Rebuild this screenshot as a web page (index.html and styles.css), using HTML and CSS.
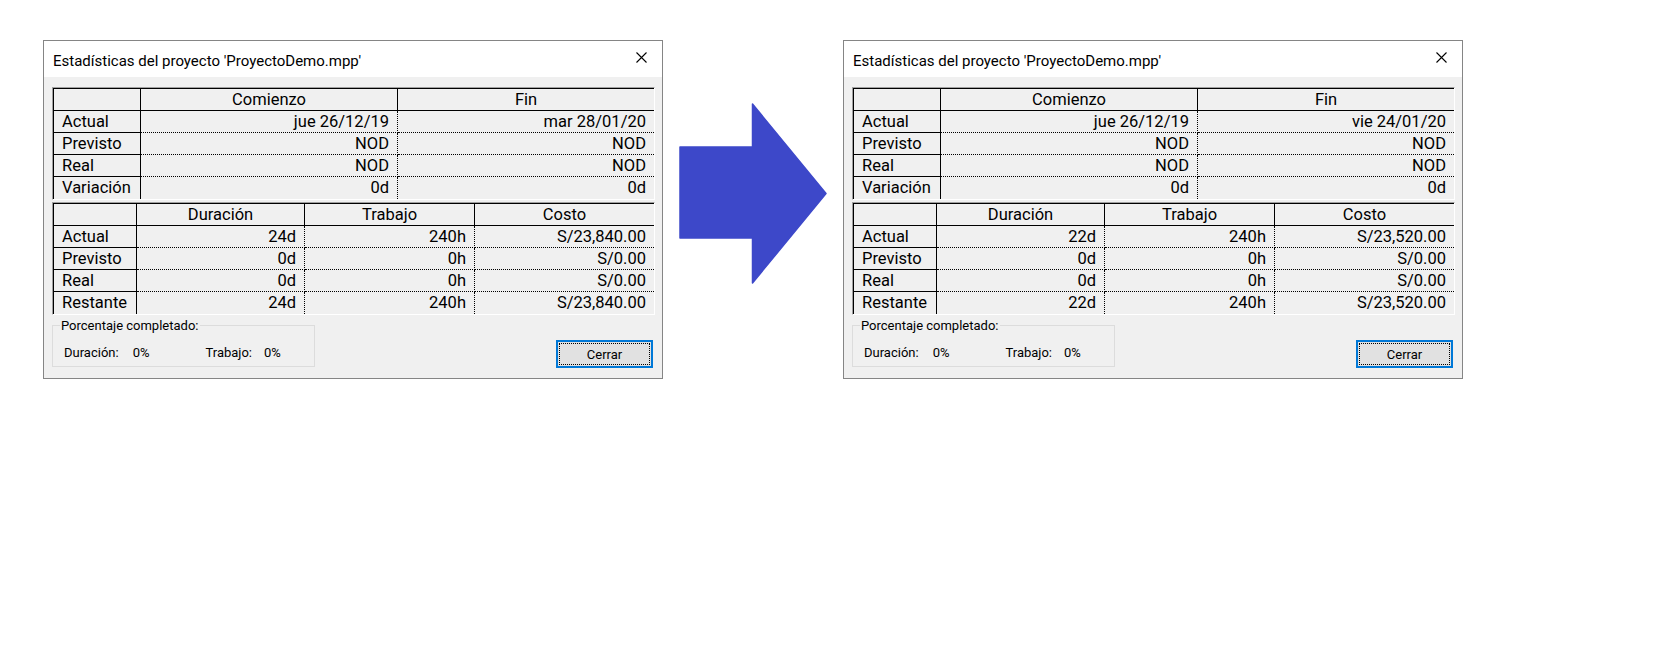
FILE: index.html
```html
<!DOCTYPE html>
<html lang="es">
<head>
<meta charset="utf-8">
<title>Estadísticas del proyecto</title>
<link rel="stylesheet" href="styles.css">
</head>
<body>
<div class="stage">
  <div class="dialog">
    <div class="titlebar">
      <span class="title">Estadísticas del proyecto 'ProyectoDemo.mpp'</span>
      <svg class="close" width="11" height="11" viewBox="0 0 11 11"><path d="M0.5 0.5 L10.5 10.5 M10.5 0.5 L0.5 10.5" stroke="#000" stroke-width="1.1" fill="none"/></svg>
    </div>
    <div class="content">
      <div class="grid g1">
        <div class="h lab"></div><div class="h">Comienzo</div><div class="h last">Fin</div>
        <div class="lab">Actual</div><div class="v">jue 26/12/19</div><div class="v last">mar 28/01/20</div>
        <div class="lab">Previsto</div><div class="v">NOD</div><div class="v last">NOD</div>
        <div class="lab">Real</div><div class="v">NOD</div><div class="v last">NOD</div>
        <div class="lab end">Variación</div><div class="v end">0d</div><div class="v last end">0d</div>
      </div>
      <div class="grid g2">
        <div class="h lab"></div><div class="h">Duración</div><div class="h">Trabajo</div><div class="h last">Costo</div>
        <div class="lab">Actual</div><div class="v">24d</div><div class="v">240h</div><div class="v last">S/23,840.00</div>
        <div class="lab">Previsto</div><div class="v">0d</div><div class="v">0h</div><div class="v last">S/0.00</div>
        <div class="lab">Real</div><div class="v">0d</div><div class="v">0h</div><div class="v last">S/0.00</div>
        <div class="lab end">Restante</div><div class="v end">24d</div><div class="v end">240h</div><div class="v last end">S/23,840.00</div>
      </div>
      <div class="bottom">
        <fieldset class="group">
          <legend>Porcentaje completado:</legend>
          <div class="pct"><span class="k">Duración:</span><span class="p1">0%</span><span class="k k2">Trabajo:</span><span>0%</span></div>
        </fieldset>
        <button class="btn"><span class="focus">Cerrar</span></button>
      </div>
    </div>
  </div>

  <svg class="arrow" width="148" height="181" viewBox="0 0 148 181"><path d="M1 44 H73.5 V1 L147 90.5 L73.5 180 V135 H1 Z" fill="#3d48c9" stroke="#3d48c9" stroke-width="1.5" stroke-linejoin="round"/></svg>

  <div class="dialog">
    <div class="titlebar">
      <span class="title">Estadísticas del proyecto 'ProyectoDemo.mpp'</span>
      <svg class="close" width="11" height="11" viewBox="0 0 11 11"><path d="M0.5 0.5 L10.5 10.5 M10.5 0.5 L0.5 10.5" stroke="#000" stroke-width="1.1" fill="none"/></svg>
    </div>
    <div class="content">
      <div class="grid g1">
        <div class="h lab"></div><div class="h">Comienzo</div><div class="h last">Fin</div>
        <div class="lab">Actual</div><div class="v">jue 26/12/19</div><div class="v last">vie 24/01/20</div>
        <div class="lab">Previsto</div><div class="v">NOD</div><div class="v last">NOD</div>
        <div class="lab">Real</div><div class="v">NOD</div><div class="v last">NOD</div>
        <div class="lab end">Variación</div><div class="v end">0d</div><div class="v last end">0d</div>
      </div>
      <div class="grid g2">
        <div class="h lab"></div><div class="h">Duración</div><div class="h">Trabajo</div><div class="h last">Costo</div>
        <div class="lab">Actual</div><div class="v">22d</div><div class="v">240h</div><div class="v last">S/23,520.00</div>
        <div class="lab">Previsto</div><div class="v">0d</div><div class="v">0h</div><div class="v last">S/0.00</div>
        <div class="lab">Real</div><div class="v">0d</div><div class="v">0h</div><div class="v last">S/0.00</div>
        <div class="lab end">Restante</div><div class="v end">22d</div><div class="v end">240h</div><div class="v last end">S/23,520.00</div>
      </div>
      <div class="bottom">
        <fieldset class="group">
          <legend>Porcentaje completado:</legend>
          <div class="pct"><span class="k">Duración:</span><span class="p1">0%</span><span class="k k2">Trabajo:</span><span>0%</span></div>
        </fieldset>
        <button class="btn"><span class="focus">Cerrar</span></button>
      </div>
    </div>
  </div>
</div>
</body>
</html>
```

FILE: styles.css
```css
html, body {
  margin: 0;
  padding: 0;
  background: #ffffff;
}
body {
  width: 1672px;
  height: 648px;
  font-family: Roboto, "Segoe UI", sans-serif;
  color: #000;
}
.stage {
  display: flex;
  align-items: flex-start;
  gap: 16px;
  padding: 40px 0 0 43px;
}
.dialog {
  box-sizing: border-box;
  width: 620px;
  height: 339px;
  border: 1px solid #858585;
  background: #f0f0f0;
  display: flex;
  flex-direction: column;
}
.titlebar {
  height: 36px;
  background: #ffffff;
  display: flex;
  align-items: center;
  justify-content: space-between;
  padding: 0 15px 0 9px;
}
.title {
  font-size: 15px;
  margin-top: 4px;
}
.close {
  display: block;
  margin-top: -3px;
}
.content {
  padding: 10px 7px 0 8px;
  display: flex;
  flex-direction: column;
  flex: 1;
}
.grid {
  display: grid;
  border-top: 1px solid #a0a0a0;
  border-left: 1px solid #a0a0a0;
  border-right: 1px solid #ffffff;
  border-bottom: 1px solid #ffffff;
  box-shadow: inset 1px 1px 0 #000;
  padding: 1px 0 0 1px;
  font-size: 16.5px;
  grid-auto-rows: 22px;
}
.g1 {
  grid-template-columns: 87px 257px 1fr;
}
.g2 {
  margin-top: 2px;
  grid-template-columns: 83px 168px 170px 1fr;
}
.grid > div {
  box-sizing: border-box;
  line-height: 22px;
  white-space: nowrap;
  overflow: hidden;
}
.h {
  text-align: center;
  border-bottom: 1px solid #000;
  border-right: 1px solid #000;
}
.lab {
  text-align: left;
  padding-left: 8px;
  border-bottom: 1px solid #000;
  border-right: 1px solid #000;
}
.v {
  text-align: right;
  padding-right: 8px;
  border-bottom: 1px dotted #000;
  border-right: 1px dotted #000;
}
.grid > .last {
  border-right: none;
}
.grid > .end {
  border-bottom: none;
}
.bottom {
  margin-top: auto;
  display: flex;
  justify-content: space-between;
  align-items: flex-end;
  padding-bottom: 10px;
}
.group {
  box-sizing: border-box;
  width: 263px;
  height: 49px;
  margin: 0 0 1px 0;
  padding: 0 0 0 11px;
  border: 1px solid #dcdcdc;
  font-size: 13px;
}
.group legend {
  padding: 0 2px 0 1px;
  margin-left: -4px;
  font-size: 13px;
}
.pct {
  display: flex;
  margin-top: 12px;
}
.pct .k {
  margin-right: 14px;
}
.pct .k2 {
  margin-right: 12px;
}
.pct .p1 {
  margin-right: 56px;
}
.btn {
  box-sizing: border-box;
  width: 97px;
  height: 28px;
  margin: 0 2px 0 0;
  padding: 1px;
  border: 2px solid #0078d7;
  background: #e1e1e1;
  font-family: Roboto, "Segoe UI", sans-serif;
  font-size: 13px;
  color: #000;
}
.btn .focus {
  display: flex;
  align-items: center;
  justify-content: center;
  height: 100%;
  box-sizing: border-box;
  border: 1px dotted #000;
  padding-top: 1px;
}
.arrow {
  display: block;
  margin-top: 63px;
}
```
